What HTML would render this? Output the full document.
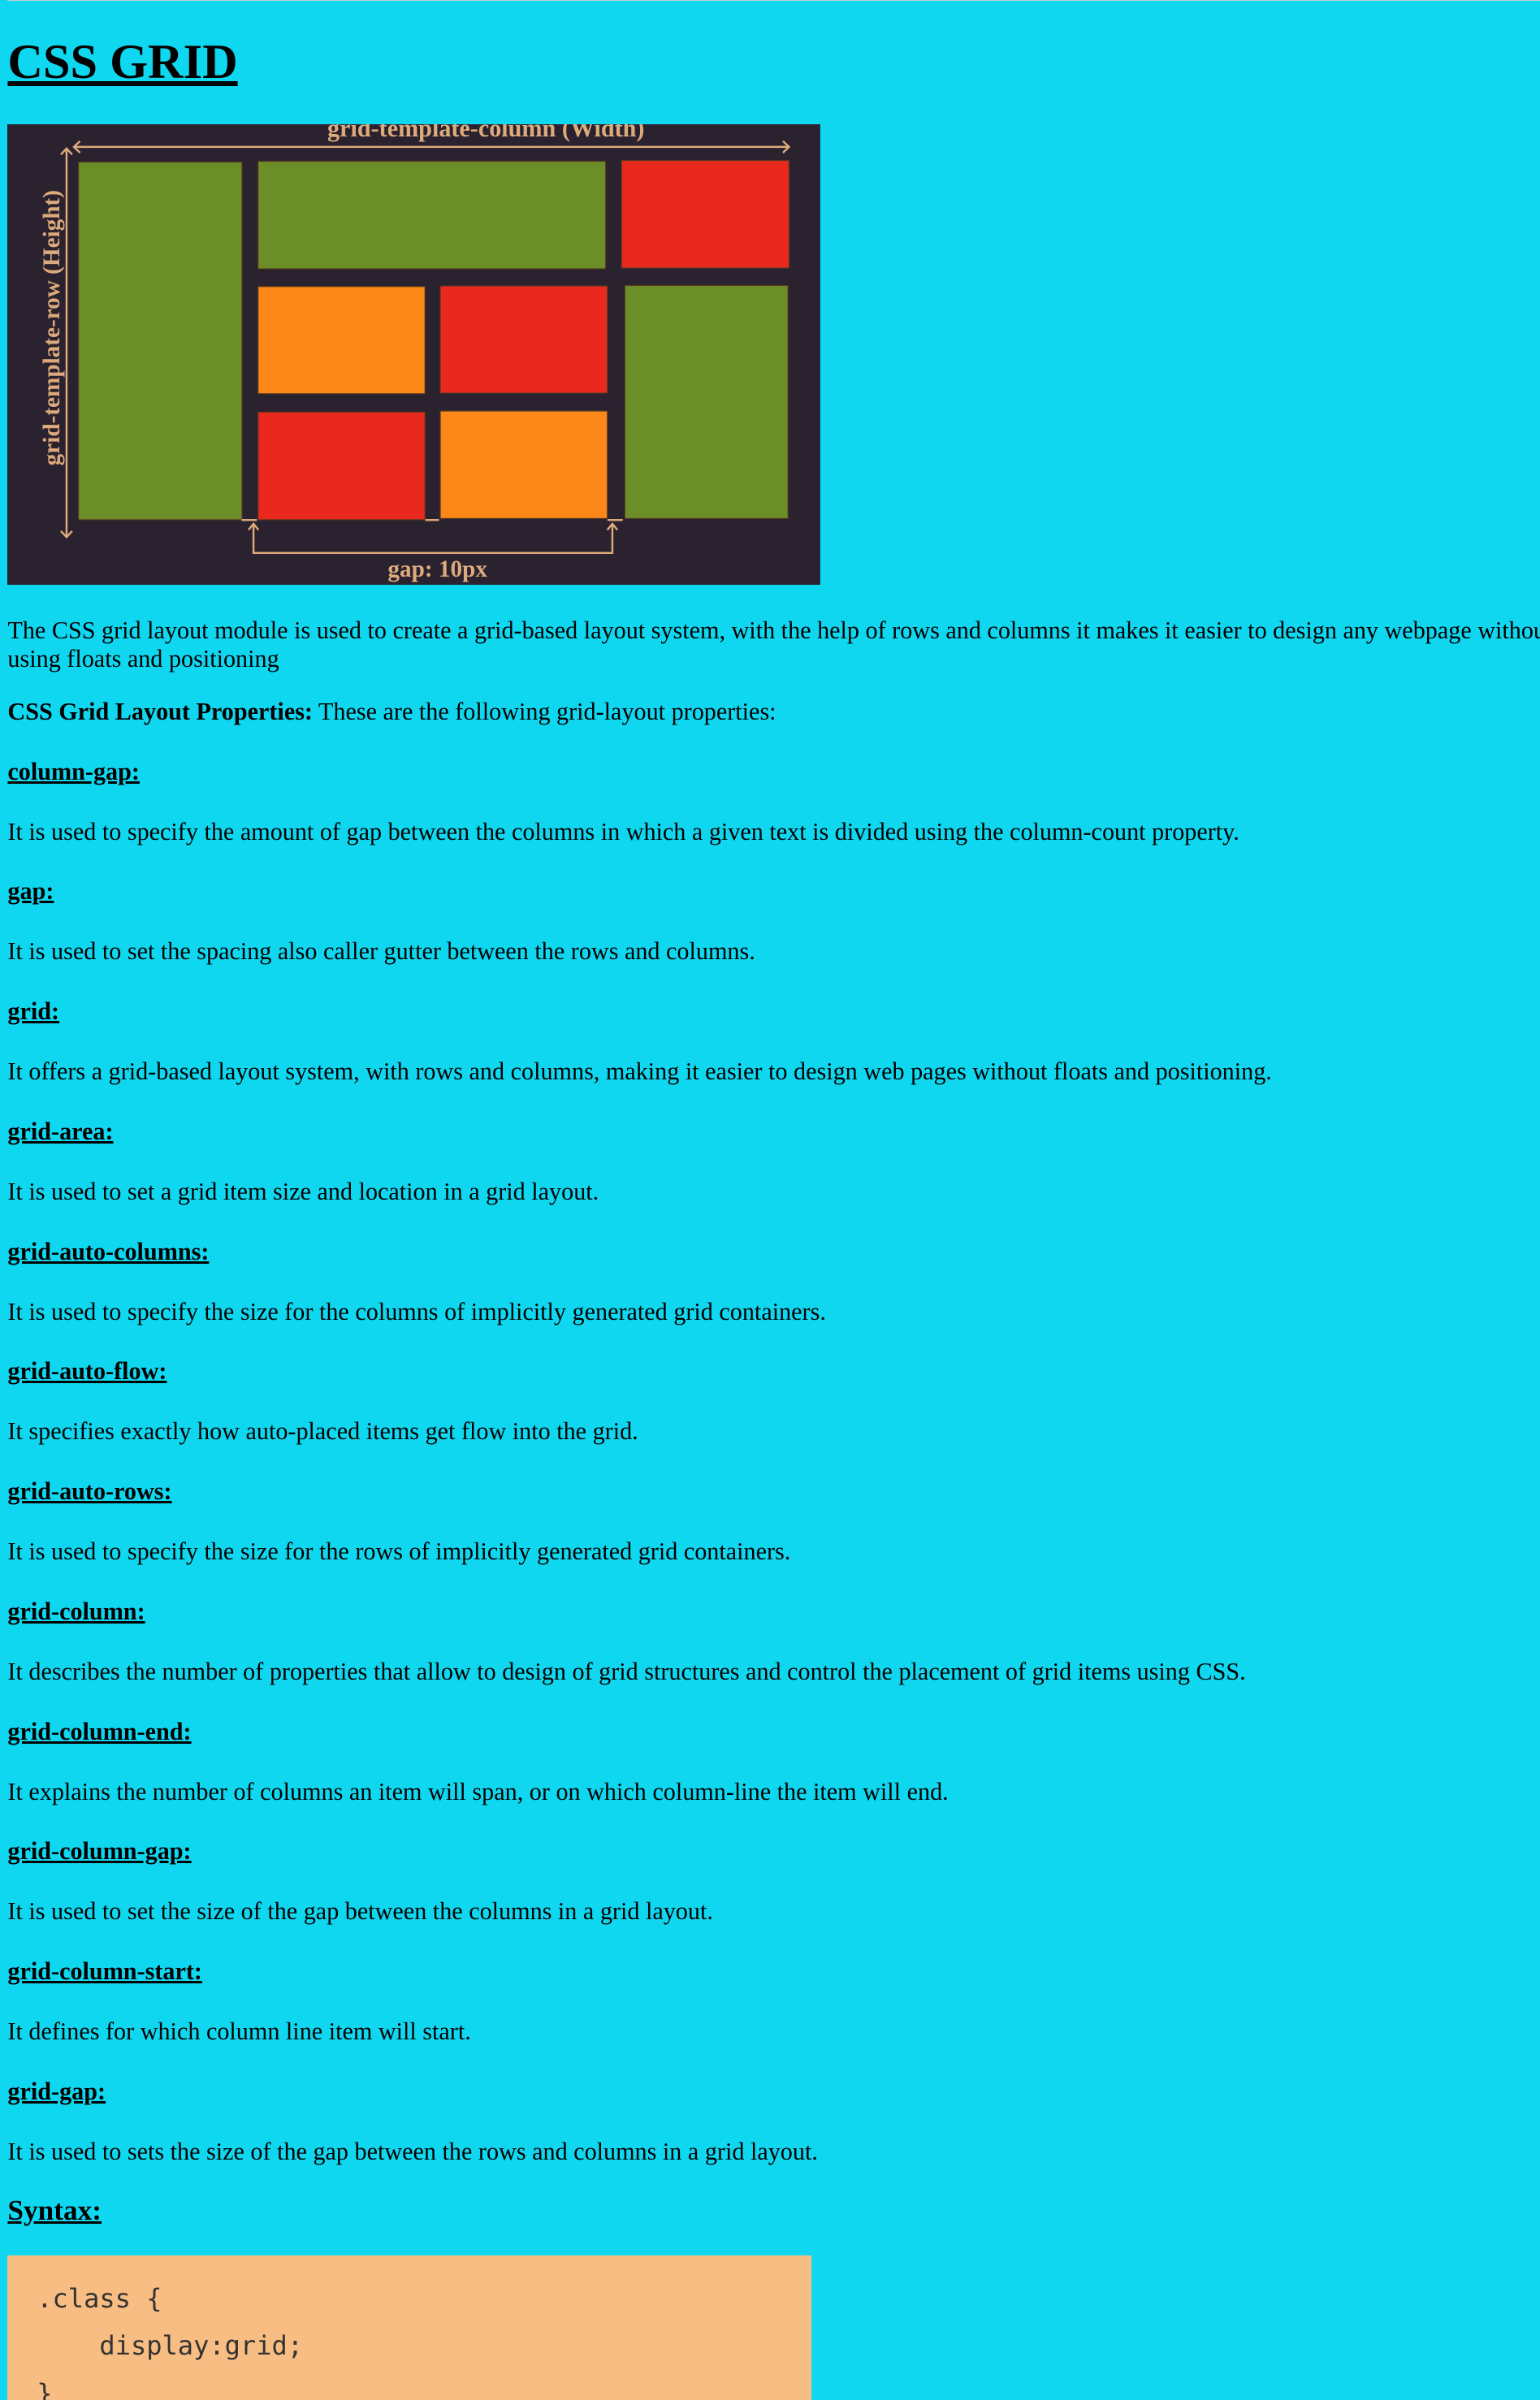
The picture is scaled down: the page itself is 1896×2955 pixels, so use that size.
<!DOCTYPE html>
<html><head><meta charset="utf-8"><style>
html{zoom:1.885;background:#0fd7f0;overflow:hidden;height:1567px;}
body{margin:0 5px;width:1035px;height:1567px;overflow:hidden;font-family:"Liberation Serif",serif;font-size:16px;color:#000;border-top:1px solid #ccc;}
h1{font-size:32px;margin:21.9px 0 21.44px;text-decoration:underline;}
h4{font-size:16px;margin:20.63px 0;text-decoration:underline;}
h3{font-size:18.72px;margin:18.72px 0;text-decoration:underline;}
p{margin:16px 0;}
p.first{margin-top:20.5px;margin-bottom:14.5px;}
.img{display:block;width:531px;height:301px;}
.code{width:525px;height:130px;background:#f8bd82;padding-top:12.5px;box-sizing:border-box;font-family:"DejaVu Sans Mono","Liberation Mono",monospace;font-size:17px;line-height:31px;color:#333;white-space:pre;padding-left:19px;}
</style></head><body>
<h1>CSS GRID</h1>
<svg class="img" viewBox="0 0 531 301" preserveAspectRatio="none">
<rect width="531" height="301" fill="#2a222e"/>
<g stroke="#5a3a20" stroke-width="0.6">
<rect x="46.5" y="24.7" width="106.8" height="233.6" fill="#6b8e28"/>
<rect x="163.8" y="24.2" width="227" height="70.2" fill="#6b8e28"/>
<rect x="401.2" y="23.7" width="109.4" height="70.2" fill="#e9281e"/>
<rect x="163.8" y="106" width="109" height="70" fill="#fc8819"/>
<rect x="282.8" y="105.6" width="109.1" height="70" fill="#e9281e"/>
<rect x="403.4" y="105.3" width="106.5" height="152.2" fill="#6b8e28"/>
<rect x="163.8" y="188" width="109" height="70.3" fill="#e9281e"/>
<rect x="282.8" y="187.3" width="109.1" height="70.2" fill="#fc8819"/>
</g>
<g stroke="#dcaa7c" stroke-width="1.3" fill="none">
<path d="M43.5 14.8H510.6M47.5 11l-4 3.8 4 3.8M506.6 11l4 3.8-4 3.8"/>
<path d="M38.7 15.8V269.7M35 19.8l3.7-4 3.7 4M35 265.7l3.7 4 3.7-4"/>
<path d="M160.8 261V280H395.2V261M157.5 265l3.3-4 3.3 4M391.9 265l3.3-4 3.3 4"/>
<path d="M153 258.5h10M273 258.5h9M392 258.5h10"/>
</g>
<g fill="#dcaa7c" font-family="Liberation Serif,serif" font-weight="bold" text-anchor="middle">
<text x="312.6" y="8" font-size="16">grid-template-column (Width)</text>
<text x="281" y="295.5" font-size="15.5">gap: 10px</text>
<text transform="translate(34 133) rotate(-90)" font-size="15.5">grid-template-row (Height)</text>
</g>
</svg>
<p class="first">The CSS grid layout module is used to create a grid-based layout system, with the help of rows and columns it makes it easier to design any webpage without using floats and positioning</p>
<p><b>CSS Grid Layout Properties:</b> These are the following grid-layout properties:</p>
<h4>column-gap:</h4>
<p>It is used to specify the amount of gap between the columns in which a given text is divided using the column-count property.</p>
<h4>gap:</h4>
<p>It is used to set the spacing also caller gutter between the rows and columns.</p>
<h4>grid:</h4>
<p>It offers a grid-based layout system, with rows and columns, making it easier to design web pages without floats and positioning.</p>
<h4>grid-area:</h4>
<p>It is used to set a grid item size and location in a grid layout.</p>
<h4>grid-auto-columns:</h4>
<p>It is used to specify the size for the columns of implicitly generated grid containers.</p>
<h4>grid-auto-flow:</h4>
<p>It specifies exactly how auto-placed items get flow into the grid.</p>
<h4>grid-auto-rows:</h4>
<p>It is used to specify the size for the rows of implicitly generated grid containers.</p>
<h4>grid-column:</h4>
<p>It describes the number of properties that allow to design of grid structures and control the placement of grid items using CSS.</p>
<h4>grid-column-end:</h4>
<p>It explains the number of columns an item will span, or on which column-line the item will end.</p>
<h4>grid-column-gap:</h4>
<p>It is used to set the size of the gap between the columns in a grid layout.</p>
<h4>grid-column-start:</h4>
<p>It defines for which column line item will start.</p>
<h4>grid-gap:</h4>
<p>It is used to sets the size of the gap between the rows and columns in a grid layout.</p>
<h3>Syntax:</h3>
<div class="code">.class {
    display:grid;
}</div>
</body></html>
